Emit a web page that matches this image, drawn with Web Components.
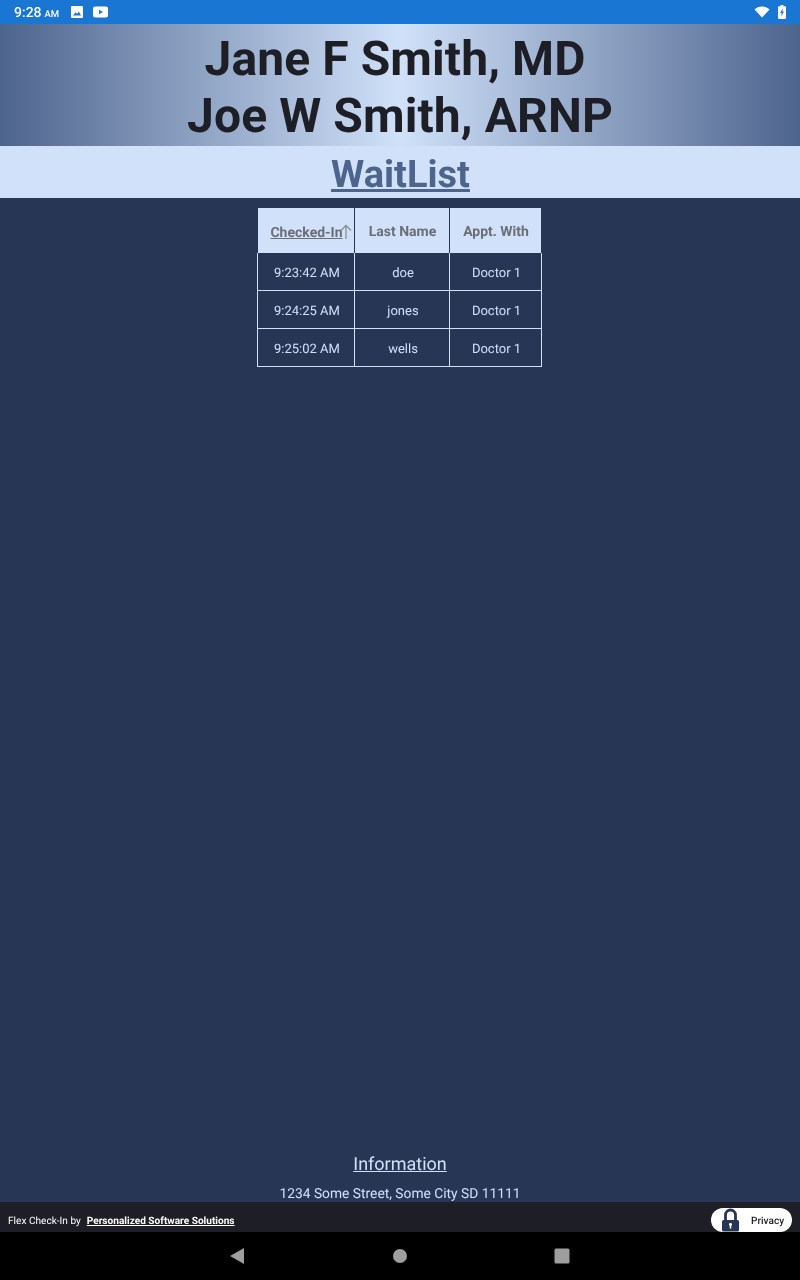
<!DOCTYPE html>
<html>
<head>
<meta charset="utf-8">
<title>WaitList</title>
<style>
html,body{margin:0;padding:0;height:100%}
body{font-family:Roboto,sans-serif;background:#283655;text-rendering:geometricPrecision}
#app{display:flex;flex-direction:column;height:1280px;width:800px;overflow:hidden;will-change:transform}
</style>
</head>
<body>
<div id="app">
  <status-bar></status-bar>
  <office-header>
    <span class="first">Jane F Smith, MD</span>
    <span>Joe W Smith, ARNP</span>
  </office-header>
  <page-title>WaitList</page-title>
  <main-area>
    <wait-table></wait-table>
    <office-info slot="bottom" address="1234 Some Street, Some City SD 11111">Information</office-info>
  </main-area>
  <app-footer></app-footer>
  <nav-bar></nav-bar>
</div>
<script>
// small helper, every element just sets its own shadow html
class Base extends HTMLElement {
  connectedCallback() {
    if (!this.shadowRoot) {
      this.attachShadow({ mode: 'open' });
      this.shadowRoot.innerHTML = this.render();
    }
  }
}

class StatusBar extends Base {
  render() {
    return `<style>
:host{display:flex;align-items:center;flex:none;height:24px;background:#1976d2;color:#fff;padding:0 14px;font:500 14px Roboto,sans-serif}
span{margin-top:2px}
small{font-size:9.5px;margin-left:3px;margin-right:11px;margin-top:4px}
svg{display:block}
.gap{flex:1}
</style>
<span>9:28</span><small>AM</small>
<svg width="14" height="14" viewBox="0 0 14 14" style="margin-right:8px"><rect x="1" y="1" width="12" height="12" rx="1" fill="#fff"/><path d="M3 10.500 5.600 7.200 7 9 8.800 6.600 11 10.500z" fill="#1976d2"/></svg>
<svg width="17" height="14" viewBox="0 0 17 14"><rect x="1" y="1.500" width="15" height="11" rx="2" fill="#fff"/><path d="M7 4.800 11 7 7 9.200z" fill="#1976d2"/></svg>
<div class="gap"></div>
<svg width="16" height="12" viewBox="0 0 16 12" style="margin-right:8px"><path d="M0.500 3.600C2.500 1.600 5 .6 8 .6s5.500 1 7.500 3L8 11.600z" fill="#fff"/></svg>
<svg width="8" height="14" viewBox="0 0 8 14"><path d="M2.600 0h2.800v1.200H7a1 1 0 0 1 1 1V13a1 1 0 0 1-1 1H1a1 1 0 0 1-1-1V2.200a1 1 0 0 1 1-1h1.600z" fill="#fff"/><path d="M4.700 3 2.200 8h1.500L3.300 11.500 5.900 6.500H4.300z" fill="#1976d2"/></svg>`;
  }
}

class OfficeHeader extends Base {
  render() {
    return `<style>
:host{display:flex;flex-direction:column;align-items:center;flex:none;height:122px;padding-top:6px;box-sizing:border-box;
  background:linear-gradient(to right,#4d648d 0%,#d0e1f9 50%,#4d648d 100%);
  color:#1e1f26;font:700 48px/57px Roboto,sans-serif;letter-spacing:.1px}
::slotted(span){display:block}
::slotted(.first){padding-right:10px}
</style><slot></slot>`;
  }
}

class PageTitle extends Base {
  render() {
    return `<style>
:host{display:block;flex:none;height:52px;box-sizing:border-box;padding-left:1px;background:#d0e1f9;color:#4d648d;text-align:center;font:700 38px/59px Roboto,sans-serif;text-decoration:underline}
</style><slot></slot>`;
  }
}

class MainArea extends Base {
  render() {
    return `<style>
:host{display:flex;flex-direction:column;align-items:center;flex:1;min-height:0;background:#283655;padding-top:9px}
.bottom{margin-top:auto}
</style><slot></slot><div class="bottom"><slot name="bottom"></slot></div>`;
  }
}

class WaitTable extends Base {
  render() {
    const rows = [
      ['9:23:42 AM', 'doe', 'Doctor 1'],
      ['9:24:25 AM', 'jones', 'Doctor 1'],
      ['9:25:02 AM', 'wells', 'Doctor 1']
    ];
    const body = rows.map(r => '<tr>' + r.map(c => `<td>${c}</td>`).join('') + '</tr>').join('');
    return `<style>
:host{display:block;font-family:Roboto,sans-serif;margin-right:1px}
table{border-collapse:collapse;table-layout:fixed;width:285px}
th{height:40px;padding:4px 0 0 1px;background:#d0e1f9;color:#6b6e76;font-size:14px;font-weight:700;border-left:1px solid #283655;border-right:1px solid #283655;border-top:1px solid #283655;position:relative}
th u{position:relative;top:1px}
th svg{position:absolute;left:82px;top:16px}
td{height:33px;padding:4px 0 0 2px;border:1px solid #d0e1f9;color:#d0e1f9;font-size:13px;text-align:center}
</style>
<table>
<colgroup><col style="width:97px"><col style="width:95px"><col style="width:92px"></colgroup>
<thead><tr><th><u>Checked-In</u><svg width="12" height="16" viewBox="0 0 12 16"><path d="M6 15V1.500M1 6.500 6 1.500 11 6.500" fill="none" stroke="#8f8f8f" stroke-width="1.300"/></svg></th><th>Last Name</th><th>Appt. With</th></tr></thead>
<tbody>${body}</tbody>
</table>`;
  }
}

class OfficeInfo extends Base {
  render() {
    return `<style>
:host{display:block;text-align:center;color:#d0e1f9;font-family:Roboto,sans-serif;height:49px}
.t{font-size:18px;line-height:24px;text-decoration:underline}
.a{font-size:13.8px;line-height:18px;margin-top:8px}
</style><div class="t"><slot></slot></div><div class="a">${this.getAttribute('address')}</div>`;
  }
}

class AppFooter extends Base {
  render() {
    return `<style>
:host{display:flex;align-items:center;flex:none;height:30px;background:#1e1f26;color:#fff;font:10.1px Roboto,sans-serif;padding:6px 8px 0;box-sizing:border-box}
span,a{margin-top:2px}
a{color:#fff;font-weight:700;margin-left:6px;text-decoration:underline}
.pill{margin-left:auto;display:flex;align-items:center;width:81px;height:24px;background:#fff;border-radius:12px;color:#1e1f26;font-weight:500;box-sizing:border-box;padding-left:10px}
.pill span{margin-left:11px;margin-top:3px}
svg{display:block}
</style>
<span>Flex Check-In by</span><a>Personalized Software Solutions</a>
<div class="pill"><svg width="19" height="24" viewBox="0 0 19 24"><path d="M4.500 13V7a5 5 0 0 1 10 0v6" fill="none" stroke="#283655" stroke-width="2.800"/><rect x="1" y="12" width="17" height="11.500" rx="1.500" fill="#283655"/><path d="M9.500 15a1.500 1.500 0 0 1 .8 2.800V20.500H8.700v-2.700A1.500 1.500 0 0 1 9.500 15z" fill="#fff"/></svg><span>Privacy</span></div>`;
  }
}

class NavBar extends Base {
  render() {
    return `<style>
:host{display:block;flex:none;height:48px;background:#000}
svg{display:block;width:800px;height:48px}
</style>
<svg viewBox="0 0 800 48"><path d="M244 16v16l-14-8z" fill="#9e9e9e"/><circle cx="400" cy="24" r="7" fill="#9e9e9e"/><rect x="554.500" y="16.500" width="15" height="15" rx="1.500" fill="#9e9e9e"/></svg>`;
  }
}

customElements.define('status-bar', StatusBar);
customElements.define('office-header', OfficeHeader);
customElements.define('page-title', PageTitle);
customElements.define('main-area', MainArea);
customElements.define('wait-table', WaitTable);
customElements.define('office-info', OfficeInfo);
customElements.define('app-footer', AppFooter);
customElements.define('nav-bar', NavBar);
</script>
</body>
</html>
